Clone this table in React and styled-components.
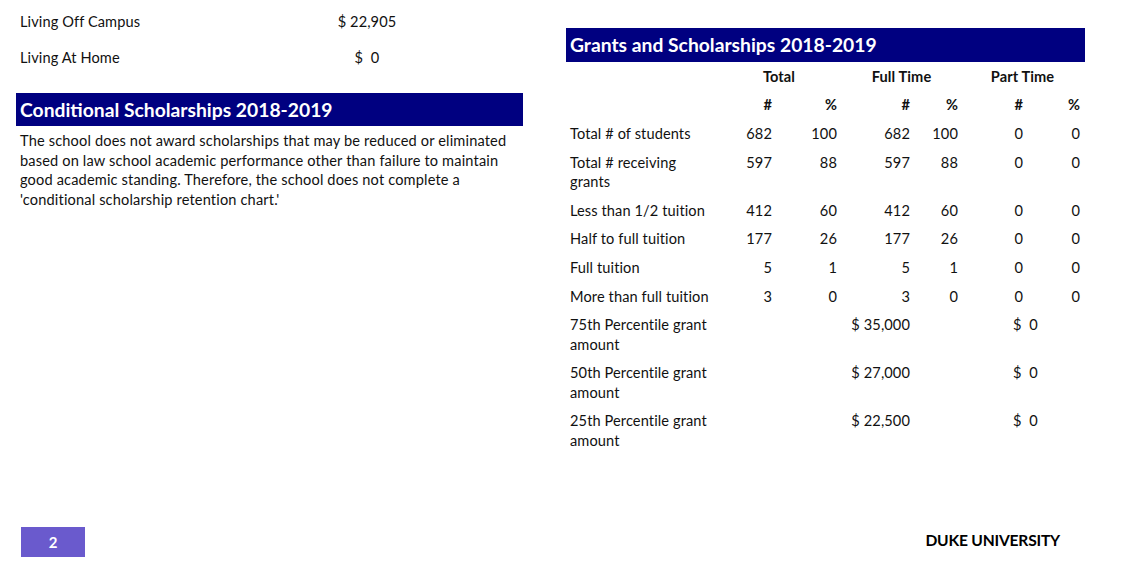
import React from "react";
import styled, { createGlobalStyle } from "styled-components";

const Global = createGlobalStyle`
  html, body { margin: 0; padding: 0; background: #fff; }
  body { font-family: Lato, "Open Sans", sans-serif; color: #111; }
`;

const Page = styled.div`
  width: 1135px;
  height: 580px;
  box-sizing: border-box;
  display: flex;
  flex-direction: column;
  padding: 4px 0 23px 16px;
`;

const Columns = styled.div`
  display: grid;
  grid-template-columns: 507px 519px;
  column-gap: 43px;
  align-items: start;
`;

const LeftCol = styled.div`
  display: flex;
  flex-direction: column;
`;

const RightCol = styled.div`
  display: flex;
  flex-direction: column;
  padding-top: 24px;
`;

const CostRow = styled.div`
  display: grid;
  grid-template-columns: 280px 134px;
  padding: 8.25px 0 8.25px 4px;
  font-size: 14.6px;
  letter-spacing: 0.1px;
  line-height: 19.5px;
`;

const CostValue = styled.span`
  text-align: center;
  white-space: pre;
`;

const SectionBar = styled.div`
  background: #000080;
  color: #fff;
  font-weight: 700;
  font-size: 19.3px;
  height: ${(p) => p.$h}px;
  line-height: ${(p) => p.$h}px;
  padding-left: 4px;
  margin-top: ${(p) => p.$mt || 0}px;
`;

const Paragraph = styled.p`
  margin: 5px 0 0;
  padding-left: 4px;
  font-size: 14.6px;
  letter-spacing: 0.15px;
  line-height: 19.5px;
`;

const Table = styled.div`
  display: grid;
  grid-template-columns: 145px 57px 65px 73px 48px 65px 57px;
  padding-left: 4px;
  font-size: 14.6px;
  letter-spacing: 0.1px;
  line-height: 19.3px;
`;

const Cell = styled.div`
  padding: 4.7px 0;
  text-align: ${(p) => p.$align || "right"};
  font-weight: ${(p) => (p.$bold ? 700 : 400)};
  grid-column: ${(p) => p.$col || "auto"};
  padding-left: ${(p) => p.$pl || 0}px;
  white-space: ${(p) => (p.$pre ? "pre" : "normal")};
`;

const Label = styled(Cell).attrs({ $align: "left" })``;

const Footer = styled.div`
  margin-top: auto;
  display: flex;
  align-items: center;
  justify-content: space-between;
  padding: 0 75px 0 5px;
`;

const PageNum = styled.div`
  width: 64px;
  height: 30px;
  background: #6a5acd;
  color: #fff;
  font-weight: 700;
  font-size: 15px;
  display: flex;
  align-items: center;
  justify-content: center;
`;

const Brand = styled.div`
  font-weight: 700;
  font-size: 15.6px;
  color: #000;
  letter-spacing: -0.2px;
  padding-bottom: 4px;
`;

const rows = [
  ["Total # of students", "682", "100", "682", "100", "0", "0"],
  ["Total # receiving grants", "597", "88", "597", "88", "0", "0"],
  ["Less than 1/2 tuition", "412", "60", "412", "60", "0", "0"],
  ["Half to full tuition", "177", "26", "177", "26", "0", "0"],
  ["Full tuition", "5", "1", "5", "1", "0", "0"],
  ["More than full tuition", "3", "0", "3", "0", "0", "0"],
];

const pct = [
  ["75th Percentile grant amount", "$ 35,000"],
  ["50th Percentile grant amount", "$ 27,000"],
  ["25th Percentile grant amount", "$ 22,500"],
];

export default function App() {
  return (
    <>
      <Global />
      <Page>
        <Columns>
          <LeftCol>
            <CostRow>
              <span>Living Off Campus</span>
              <CostValue>$ 22,905</CostValue>
            </CostRow>
            <CostRow>
              <span>Living At Home</span>
              <CostValue>{"$  0"}</CostValue>
            </CostRow>
            <SectionBar $h={33} $mt={17}>
              Conditional Scholarships 2018-2019
            </SectionBar>
            <Paragraph>
              The school does not award scholarships that may be reduced or eliminated
              based on law school academic performance other than failure to maintain
              good academic standing. Therefore, the school does not complete a
              'conditional scholarship retention chart.'
            </Paragraph>
          </LeftCol>
          <RightCol>
            <SectionBar $h={34}>Grants and Scholarships 2018-2019</SectionBar>
            <Table>
              <Cell />
              <Cell $col="2 / span 2" $align="center" $pl={6} $bold>Total</Cell>
              <Cell $col="4 / span 2" $align="center" $pl={8} $bold>Full Time</Cell>
              <Cell $col="6 / span 2" $align="center" $pl={7} $bold>Part Time</Cell>
              <Cell />
              {["#", "%", "#", "%", "#", "%"].map((h, i) => (
                <Cell key={i} $bold>{h}</Cell>
              ))}
              {rows.map((r) => (
                <React.Fragment key={r[0]}>
                  <Label>{r[0]}</Label>
                  {r.slice(1).map((v, i) => (
                    <Cell key={i}>{v}</Cell>
                  ))}
                </React.Fragment>
              ))}
              {pct.map((r) => (
                <React.Fragment key={r[0]}>
                  <Label>{r[0]}</Label>
                  <Cell $col="4 / span 1">{r[1]}</Cell>
                  <Cell $col="6 / span 2" $align="left" $pl={55} $pre>{"$  0"}</Cell>
                </React.Fragment>
              ))}
            </Table>
          </RightCol>
        </Columns>
        <Footer>
          <PageNum>2</PageNum>
          <Brand>DUKE UNIVERSITY</Brand>
        </Footer>
      </Page>
    </>
  );
}
